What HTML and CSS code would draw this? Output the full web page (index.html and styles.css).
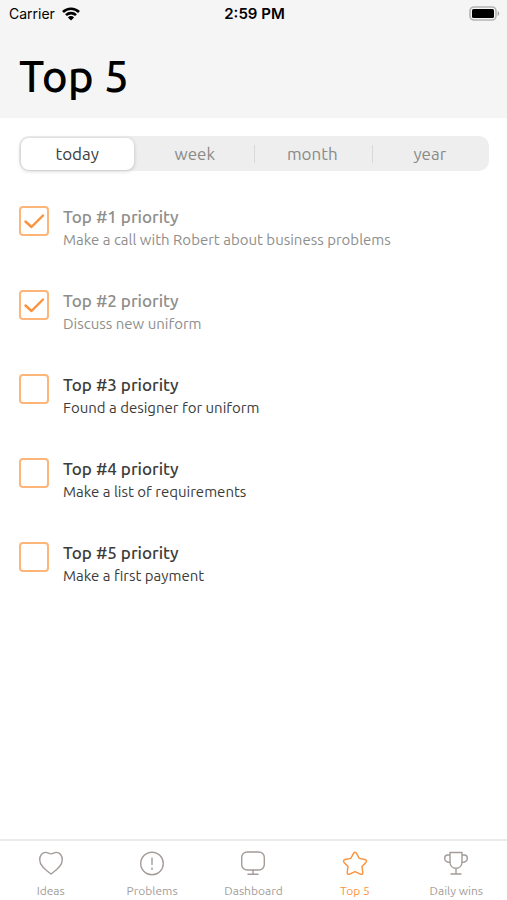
FILE: index.html
```html
<!DOCTYPE html>
<html lang="en">
<head>
<meta charset="utf-8">
<meta name="viewport" content="width=device-width, initial-scale=1">
<title>Top 5</title>
<link rel="stylesheet" href="styles.css">
</head>
<body>
<div class="app">
  <header class="header">
    <div class="status">
      <div class="status-left">
        <span>Carrier</span>
        <svg class="wifi" viewBox="0 0 18 14" aria-hidden="true">
          <path d="M1 5a11.300 11.300 0 0 1 16 0M4 8.200a7 7 0 0 1 10 0" fill="none" stroke="#000" stroke-width="2.600"/>
          <path d="M9 13.600 5.900 10.400a4.400 4.400 0 0 1 6.200 0z"/>
        </svg>
      </div>
      <span class="clock">2:59 PM</span>
      <div class="status-right">
        <svg class="battery" viewBox="0 0 31 15" aria-hidden="true">
          <rect x="1" y="1" width="26" height="13" rx="4" fill="#f5f5f5" stroke="#b4b4b4" stroke-width="1.600"/>
          <rect x="3" y="3" width="22" height="9" rx="1.500"/>
          <path d="M28.600 5c2.200.8 2.200 4.200 0 5z" fill="#a6a6a6"/>
        </svg>
      </div>
    </div>
    <h1 class="title">Top 5</h1>
  </header>

  <main class="content">
    <div class="segments" role="radiogroup" aria-label="Period">
      <label class="segment"><input type="radio" name="period" checked><span>today</span></label>
      <label class="segment"><input type="radio" name="period"><span>week</span></label>
      <label class="segment divided"><input type="radio" name="period"><span>month</span></label>
      <label class="segment divided"><input type="radio" name="period"><span>year</span></label>
    </div>

    <ul class="list">
      <li><label class="item done">
        <input class="check" type="checkbox" checked>
        <span class="text"><span class="name">Top #1 priority</span><span class="note">Make a call with Robert about business problems</span></span>
        <svg class="tick" viewBox="0 0 30 30" aria-hidden="true"><path d="m6.500 15.500 6 5.500L24 9.500"/></svg>
      </label></li>
      <li><label class="item done">
        <input class="check" type="checkbox" checked>
        <span class="text"><span class="name">Top #2 priority</span><span class="note">Discuss new uniform</span></span>
        <svg class="tick" viewBox="0 0 30 30" aria-hidden="true"><path d="m6.500 15.500 6 5.500L24 9.500"/></svg>
      </label></li>
      <li><label class="item">
        <input class="check" type="checkbox">
        <span class="text"><span class="name">Top #3 priority</span><span class="note">Found a designer for uniform</span></span>
      </label></li>
      <li><label class="item">
        <input class="check" type="checkbox">
        <span class="text"><span class="name">Top #4 priority</span><span class="note">Make a list of requirements</span></span>
      </label></li>
      <li><label class="item">
        <input class="check" type="checkbox">
        <span class="text"><span class="name">Top #5 priority</span><span class="note">Make a first payment</span></span>
      </label></li>
    </ul>
  </main>

  <nav class="tabs" aria-label="Main">
    <a class="tab" href="#ideas">
      <svg viewBox="0 0 26 26" aria-hidden="true"><path d="M13 24C8.500 20.500 1.700 16.300 1.700 9.700 1.700 5.500 4.300 2.400 7.700 2.400c2.200 0 3.300 1.500 5.300 1.500s3.100-1.500 5.300-1.500c3.400 0 6 3.100 6 7.300C24.300 16.300 17.500 20.500 13 24z"/></svg>
      <span>Ideas</span>
    </a>
    <a class="tab" href="#problems">
      <svg viewBox="0 0 26 26" aria-hidden="true"><circle cx="13" cy="13.500" r="11.300"/><path d="M13 8v6.500M13 18v1.400"/></svg>
      <span>Problems</span>
    </a>
    <a class="tab" href="#dashboard">
      <svg viewBox="0 0 26 26" aria-hidden="true"><rect x="1.700" y="2" width="22.600" height="18" rx="5.500"/><path d="M13 20v4M8 24.300h10"/></svg>
      <span>Dashboard</span>
    </a>
    <a class="tab active" href="#top5" aria-current="page">
      <svg viewBox="0 0 26 26" aria-hidden="true"><path d="M11.500 3.400q1.500-2.200 3 0l2.700 5 5.700 1.100q2.600.8 1 2.900L20 16.600l.8 5.800q0 2.500-2.400 1.700L13 21.600l-5.400 2.500q-2.400.8-2.400-1.700l.8-5.800-3.900-4.200q-1.600-2.100 1-2.900l5.700-1.100z"/></svg>
      <span>Top 5</span>
    </a>
    <a class="tab" href="#wins">
      <svg viewBox="0 0 26 26" aria-hidden="true"><path d="M7 2.500h12v9.500c0 3.700-2.500 6.300-6 6.300s-6-2.600-6-6.300zM7 5H4.500C2.700 5 1.700 6.300 1.700 8.200c0 2.400 1.800 4 5.300 4.300M19 5h2.500c1.800 0 2.800 1.300 2.800 3.200 0 2.400-1.800 4-5.300 4.300M13 18.300v5.500M8 24h10"/></svg>
      <span>Daily wins</span>
    </a>
  </nav>
</div>
</body>
</html>
```

FILE: styles.css
```css
* {
  box-sizing: border-box;
}

body {
  margin: 0;
  background: #fff;
  color: #444;
  font-family: Ubuntu, "Noto Sans", sans-serif;
}

.app {
  display: flex;
  flex-direction: column;
  min-height: 100vh;
}

.header {
  padding-bottom: 13px;
  background: #f5f5f5;
  color: #000;
}

.status {
  display: grid;
  grid-template-columns: 1fr auto 1fr;
  align-items: center;
  height: 27px;
  padding: 0 7px 0 9px;
  font: 14px/20px Inter, sans-serif;
}

.status-left,
.status-right {
  display: flex;
  align-items: center;
  gap: 7px;
}

.status-right {
  justify-content: flex-end;
}

.clock {
  font-size: 15px;
  font-weight: 600;
}

.wifi {
  width: 18px;
  height: 14px;
}

.battery {
  width: 31px;
  height: 15px;
}

.title {
  margin: 0;
  padding: 20px 19px 0;
  font-size: 44px;
  font-weight: 500;
  line-height: 58px;
}

.content {
  flex: 1;
  padding: 18px 18px 24px 19px;
}

.segments {
  display: grid;
  grid-template-columns: repeat(4, 1fr);
  height: 35px;
  border-radius: 10px;
  background: #eee;
}

.segment {
  display: flex;
  padding: 2px 3px 2px 2px;
  color: #8a8a87;
  font-size: 17px;
  line-height: 32px;
  text-align: center;
  cursor: pointer;
}

.segment input {
  position: absolute;
  opacity: 0;
}

.segment span {
  flex: 1;
  border-radius: 8px;
}

.segment input:checked + span {
  background: #fff;
  box-shadow: 0 1px 4px rgba(0, 0, 0, 0.2);
  color: #3c3c3a;
}

.divided {
  background: linear-gradient(#d8d8d8, #d8d8d8) left center / 1px 18px no-repeat;
}

.list {
  display: grid;
  gap: 36px;
  margin: 0;
  padding: 34px 0 0;
  list-style: none;
}

.item {
  position: relative;
  display: flex;
  gap: 14px;
  height: 48px;
  color: #3c3c3a;
}

.check {
  appearance: none;
  flex: none;
  width: 30px;
  height: 30px;
  margin: 1px 0 0;
  border: 2px solid #fdb57a;
  border-radius: 4px;
}

.tick {
  position: absolute;
  top: 1px;
  left: 0;
  width: 30px;
  height: 30px;
  fill: none;
  stroke: #fb923c;
  stroke-width: 2.4;
  stroke-linecap: round;
  stroke-linejoin: round;
}

.text {
  display: flex;
  flex-direction: column;
}

.name {
  font-size: 17px;
  font-weight: 500;
  line-height: 24px;
}

.note {
  font-size: 15px;
  line-height: 22px;
}

.item.done {
  color: #8e8e8b;
}

.tabs {
  display: grid;
  grid-template-columns: repeat(5, 1fr);
  padding: 9px 0 0;
  height: 61px;
  border-top: 2px solid #ebebeb;
}

.tab {
  display: flex;
  flex-direction: column;
  align-items: center;
  gap: 7px;
  color: #a39c99;
  font-size: 12px;
  line-height: 16px;
  text-decoration: none;
}

.tab svg {
  width: 26px;
  height: 26px;
  fill: none;
  stroke: currentColor;
  stroke-width: 1.4;
  stroke-linecap: round;
  stroke-linejoin: round;
}

.tab.active {
  color: #fb923c;
}
```
